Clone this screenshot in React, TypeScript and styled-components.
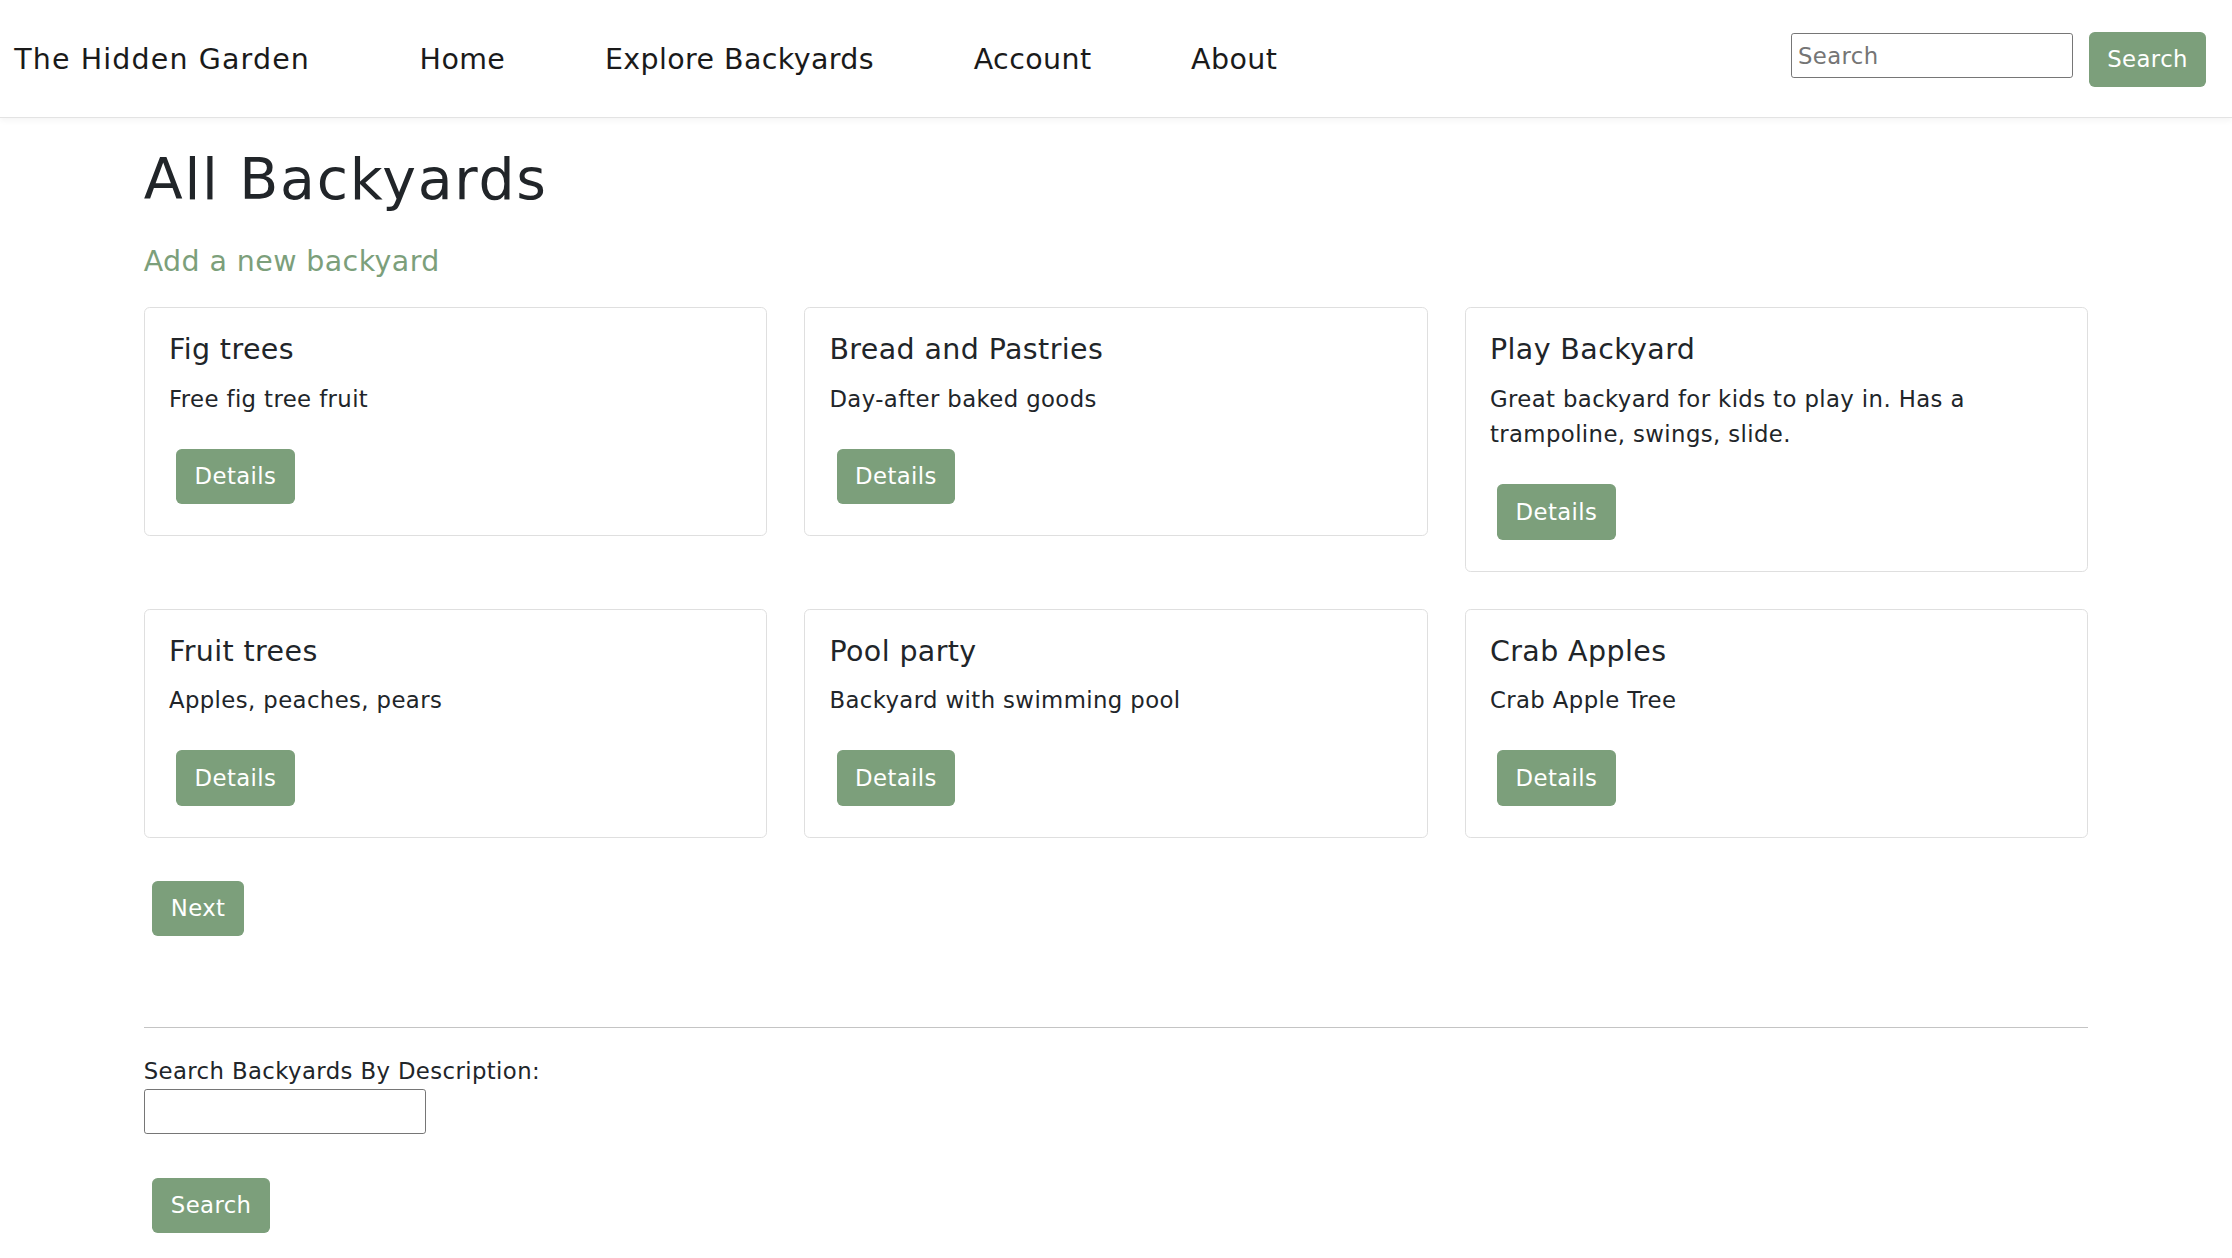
import React from 'react';
import styled, { createGlobalStyle } from 'styled-components';

// the reference is rendered at ~1.4235x, so sizes are written in css px and scaled
const r = (n: number) => `${(n * 1.4235).toFixed(2)}px`;

const green = '#7c9f7b';
const text = '#212529';

const GlobalStyle = createGlobalStyle`
  * { box-sizing: border-box; }
  body {
    margin: 0;
    background: #fff;
    color: ${text};
    font-family: "DejaVu Sans", "Noto Sans", sans-serif;
    letter-spacing: 0.025em;
  }
`;

const NavBar = styled.nav`
  display: flex;
  align-items: center;
  height: ${r(83)};
  padding: ${r(1)} ${r(18)} 0 ${r(10)};
  background: #fff;
  border-bottom: 1px solid #e3e3e3;
  box-shadow: 0 ${r(2)} ${r(4)} rgba(0, 0, 0, 0.04);
`;

const Brand = styled.a`
  font-size: ${r(20)};
  letter-spacing: 0.04em;
  color: #1a1a1a;
  text-decoration: none;
  margin-right: ${r(77)};
`;

const NavLinks = styled.div`
  display: flex;
  gap: ${r(70)};
  flex: 1;
`;

const NavLink = styled.a`
  font-size: ${r(20)};
  color: #1a1a1a;
  text-decoration: none;
`;

const SearchForm = styled.form`
  display: flex;
  align-items: center;
  gap: ${r(11)};
`;

const TextInput = styled.input<{ $height: number }>`
  width: ${r(198)};
  height: ${({ $height }) => r($height)};
  border: 1px solid #767676;
  border-radius: ${r(2)};
  padding: 0 ${r(4)};
  font-family: inherit;
  font-size: ${r(16)};
  letter-spacing: inherit;
  color: ${text};
  &::placeholder { color: #757575; }
`;

const NavInput = styled(TextInput)`
  margin-bottom: ${r(5)};
`;

const Button = styled.button`
  display: inline-block;
  height: ${r(39)};
  padding: 0 ${r(13)};
  margin: ${r(6)} ${r(6)};
  background: ${green};
  color: #fff;
  border: none;
  border-radius: ${r(4)};
  font-family: inherit;
  font-size: ${r(16)};
  letter-spacing: inherit;
  cursor: pointer;
`;

const NavButton = styled(Button)`
  margin: 0;
`;

const Container = styled.main`
  max-width: ${r(1366)};
  margin: 0 auto;
`;

const Heading = styled.h1`
  font-size: ${r(40)};
  font-weight: 400;
  letter-spacing: 0.03em;
  line-height: 1.2;
  margin: ${r(19)} 0 ${r(22)};
`;

const AddLink = styled.a`
  display: block;
  font-size: ${r(20)};
  line-height: 1.2;
  color: ${green};
  text-decoration: none;
  margin-bottom: ${r(20)};
`;

const CardGrid = styled.div`
  display: grid;
  grid-template-columns: repeat(3, 1fr);
  column-gap: ${r(26)};
  row-gap: ${r(26)};
  align-items: start;
  margin-bottom: ${r(24)};
`;

const Card = styled.div`
  border: 1px solid #dfdfdf;
  border-radius: ${r(4)};
  padding: ${r(17.5)} ${r(17)} ${r(16)};
`;

const CardTitle = styled.h5`
  font-size: ${r(20)};
  font-weight: 400;
  line-height: 1.2;
  margin: 0 0 ${r(10)};
`;

const CardText = styled.p`
  font-size: ${r(16)};
  line-height: ${r(25)};
  margin: 0 0 ${r(22)};
`;

const DetailsButton = styled(Button)`
  margin: 0 0 ${r(6)} ${r(5)};
`;

const Divider = styled.hr`
  border: none;
  border-top: 1px solid #c4c4c4;
  margin: ${r(58)} 0 ${r(18)};
`;

const Label = styled.label`
  display: block;
  font-size: ${r(16)};
  line-height: ${r(24)};
  margin-bottom: ${r(1)};
`;

const SearchBlock = styled.div`
  display: flex;
  flex-direction: column;
  align-items: flex-start;
  gap: ${r(31)};
`;

const SearchButton = styled(Button)`
  margin: 0 ${r(6)};
`;

const backyards = [
  { title: 'Fig trees', description: 'Free fig tree fruit' },
  { title: 'Bread and Pastries', description: 'Day-after baked goods' },
  {
    title: 'Play Backyard',
    description: 'Great backyard for kids to play in. Has a trampoline, swings, slide.',
  },
  { title: 'Fruit trees', description: 'Apples, peaches, pears' },
  { title: 'Pool party', description: 'Backyard with swimming pool' },
  { title: 'Crab Apples', description: 'Crab Apple Tree' },
];

const App: React.FC = () => {
  return (
    <>
      <GlobalStyle />
      <NavBar>
        <Brand href="#">The Hidden Garden</Brand>
        <NavLinks>
          <NavLink href="#">Home</NavLink>
          <NavLink href="#">Explore Backyards</NavLink>
          <NavLink href="#">Account</NavLink>
          <NavLink href="#">About</NavLink>
        </NavLinks>
        <SearchForm onSubmit={(e) => e.preventDefault()}>
          <NavInput $height={32} placeholder="Search" />
          <NavButton type="submit">Search</NavButton>
        </SearchForm>
      </NavBar>
      <Container>
        <Heading>All Backyards</Heading>
        <AddLink href="#">Add a new backyard</AddLink>
        <CardGrid>
          {backyards.map((b) => (
            <Card key={b.title}>
              <CardTitle>{b.title}</CardTitle>
              <CardText>{b.description}</CardText>
              <DetailsButton>Details</DetailsButton>
            </Card>
          ))}
        </CardGrid>
        <Button>Next</Button>
        <Divider />
        <SearchBlock>
          <div>
            <Label>Search Backyards By Description:</Label>
            <TextInput $height={31} />
          </div>
          <SearchButton>Search</SearchButton>
        </SearchBlock>
      </Container>
    </>
  );
};

export default App;
